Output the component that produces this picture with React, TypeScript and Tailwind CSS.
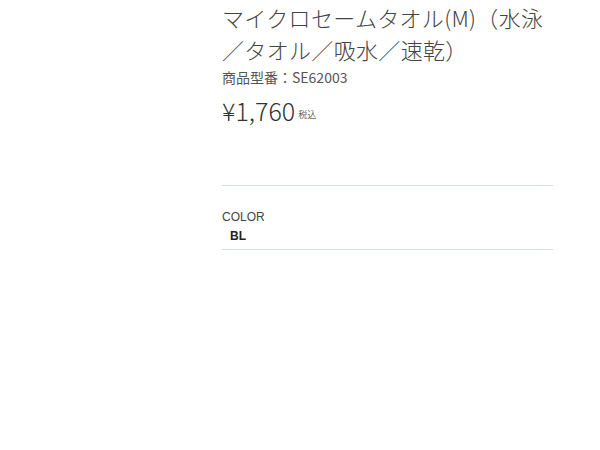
export default function App() {
  return (
    <div className="w-[600px] h-[450px] bg-white overflow-hidden font-['Noto_Sans_CJK_JP','Noto_Sans',sans-serif] text-[#333]">
      <div className="ml-[222px] w-[331px]">
        <h1 className="text-[22px] leading-[32px] tracking-[0.015em] font-light text-[#444] pt-[1px]">
          マイクロセームタオル(M)（水泳／タオル／吸水／速乾）
        </h1>
        <p className="mt-[3px] text-[14px] leading-[18px] text-[#555]">
          商品型番：SE62003
        </p>
        <div className="mt-[9px] flex items-end gap-[3px]">
          <span className="text-[25px] leading-[30px] font-light text-[#333]">¥1,760</span>
          <span className="text-[9px] leading-[14px] mb-[3px] text-[#666]">税込</span>
        </div>
        <div className="mt-[60px] border-t border-[#d5dfdc]" />
        <div className="pt-[22px] pb-[4px]">
          <div className="text-[12px] leading-[19px] text-[#444] font-['Liberation_Sans',sans-serif]">COLOR</div>
          <div className="pl-[8px] text-[12px] leading-[18px] font-bold text-[#222] font-['Liberation_Sans',sans-serif]">BL</div>
        </div>
        <div className="border-t border-[#d5dfdc]" />
      </div>
    </div>
  );
}
